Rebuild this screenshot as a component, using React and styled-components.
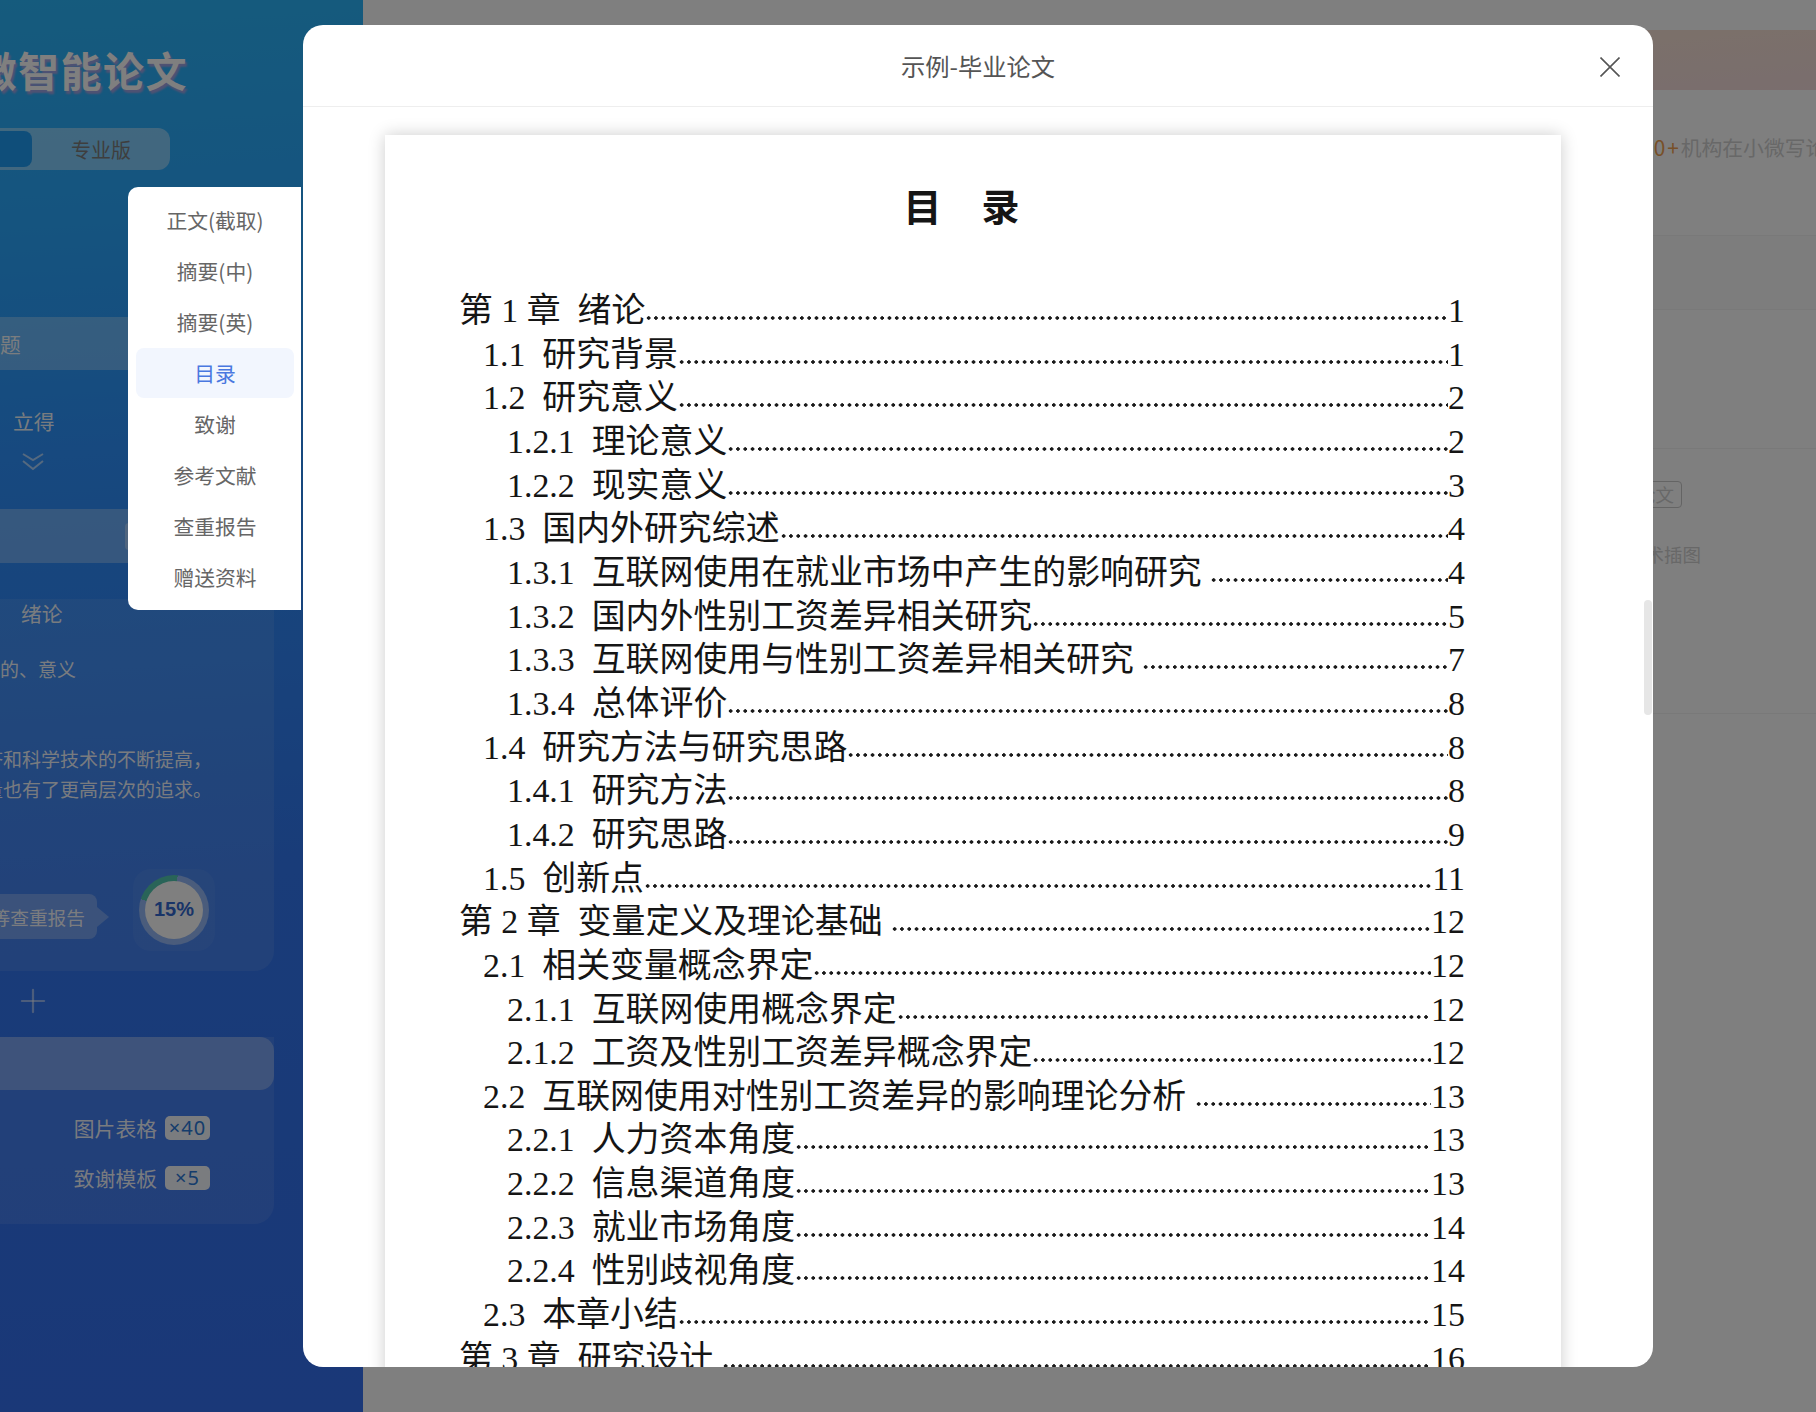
import React from 'react';
import styled, { createGlobalStyle } from 'styled-components';
import { Plus } from 'lucide-react';

const GlobalStyle = createGlobalStyle`
  html, body {
    margin: 0;
    padding: 0;
    background: #fff;
  }
  body {
    font-family: "Noto Sans CJK SC", "Noto Sans", sans-serif;
  }
`;

const Screen = styled.div`
  position: relative;
  display: flex;
  width: 1816px;
  height: 1412px;
  overflow: hidden;
`;

const Sidebar = styled.aside`
  flex: 0 0 363px;
  overflow: hidden;
  background: linear-gradient(176deg, #2ab6fa 0%, #2aa8ff 16%, #2e92fe 32%, #3278f2 62%, #3470f0 100%);
`;

const SidebarInner = styled.div`
  width: 402px;
  margin-left: -128px;
  color: rgba(255, 255, 255, 0.95);
  font-size: 20.8px;
`;

const Brand = styled.h1`
  margin: 0 86px 0 0;
  padding-top: 41px;
  height: 128px;
  box-sizing: border-box;
  text-align: right;
  white-space: nowrap;
  font-size: 41px;
  line-height: 56px;
  letter-spacing: 1.5px;
  font-weight: 700;
  color: #fff;
  text-shadow: 2px 3px 2px rgba(190, 160, 224, 0.8);
`;

const Toggle = styled.div`
  display: flex;
  align-items: center;
  width: 298px;
  height: 42px;
  padding: 3px 0;
  box-sizing: border-box;
  border-radius: 12px;
  background: rgba(255, 255, 255, 0.42);
`;

const ToggleTab = styled.div`
  flex: ${props => (props.$active ? '0 0 160px' : '1')};
  height: 36px;
  border-radius: 8px;
  font-size: 20px;
  line-height: 38px;
  text-align: center;
  color: #7d7d7d;
  background: ${props => (props.$active ? '#1f9cf4' : 'transparent')};
`;

const Band = styled.div`
  display: flex;
  align-items: center;
  height: ${props => props.$height}px;
  margin-top: ${props => props.$top || 0}px;
  border-radius: ${props => props.$radius || '14px 14px 0 0'};
  background: rgba(255, 255, 255, 0.3);
`;

const Hidden = styled.span`
  padding-left: 128px;
`;

const ChipStub = styled.div`
  width: 60px;
  height: 27px;
  margin-left: 253px;
  border-radius: 4px;
  background: rgba(255, 255, 255, 0.35);
`;

const PlainLine = styled.div`
  margin-top: ${props => props.$top || 0}px;
  padding-left: ${props => props.$left || 0}px;
  line-height: 28px;
`;

const ChevronWrap = styled.div`
  height: 20px;
  margin: 12px 0 42px 150px;
  color: rgba(255, 255, 255, 0.6);
`;

const Card = styled.section`
  padding-bottom: ${props => props.$bottom || 20}px;
  border-radius: 0 0 20px 20px;
  background: rgba(255, 255, 255, 0.09);
`;

const RightLine = styled.div`
  margin: ${props => props.$top}px 62px 0 0;
  text-align: right;
  white-space: nowrap;
  font-size: 19px;
  line-height: ${props => props.$line || 30}px;
`;

const PurposeLine = styled(RightLine)`
  margin-right: 198px;
`;

const StatusRow = styled.div`
  display: flex;
  align-items: center;
  justify-content: flex-end;
  gap: 36px;
  height: 82px;
  margin: 65px 59px 0 0;
`;

const Tip = styled.div`
  position: relative;
  height: 45px;
  margin-top: 12px;
  padding: 0 12px;
  border-radius: 8px;
  background: rgba(255, 255, 255, 0.27);
  font-size: 18.7px;
  line-height: 45px;
  white-space: nowrap;

  &::after {
    content: '';
    position: absolute;
    top: 13px;
    right: -12px;
    border-top: 10px solid transparent;
    border-bottom: 10px solid transparent;
    border-left: 12px solid rgba(255, 255, 255, 0.27);
  }
`;

const RateBox = styled.div`
  display: flex;
  align-items: center;
  justify-content: center;
  width: 82px;
  height: 82px;
  border-radius: 18px;
  background: rgba(255, 255, 255, 0.05);
`;

const Ring = styled.div`
  display: flex;
  align-items: center;
  justify-content: center;
  width: 70px;
  height: 70px;
  border-radius: 50%;
`;

const RingCenter = styled.div`
  width: 58px;
  height: 58px;
  border-radius: 50%;
  background: #fff;
  color: #3268d0;
  font-family: "Liberation Sans", sans-serif;
  font-size: 20px;
  font-weight: 700;
  line-height: 56px;
  text-align: center;
`;

const PlusRow = styled.div`
  display: flex;
  align-items: center;
  height: 60px;
  margin-bottom: 6px;
  padding-left: 142px;
  color: rgba(255, 255, 255, 0.5);
`;

const GiftRows = styled.div`
  display: flex;
  flex-direction: column;
  gap: 26px;
  padding-top: 26px;
`;

const GiftRow = styled.div`
  display: flex;
  justify-content: flex-end;
  align-items: center;
  gap: 8px;
  height: 24px;
  margin-right: 64px;
  white-space: nowrap;
`;

const Badge = styled.span`
  width: 45px;
  height: 24px;
  border-radius: 5px;
  background: rgba(255, 255, 255, 0.95);
  color: #2a78d8;
  font-family: "Noto Sans", sans-serif;
  font-size: 20px;
  letter-spacing: 1px;
  line-height: 24px;
  text-align: center;
`;

const Main = styled.main`
  flex: 1;
  min-width: 0;
  overflow: hidden;
  background: #fff;
  color: #d0d0d0;
`;

const Banner = styled.div`
  height: 60px;
  margin-top: 30px;
  background: linear-gradient(175deg, #fae8c8, #f4dcdc);
`;

const StatRow = styled.div`
  height: 146px;
  box-sizing: border-box;
  padding: 27px 0 0 1250px;
  font-size: 20.8px;
  line-height: 60px;
  white-space: nowrap;
  border-bottom: 1px solid #f2f2f2;

  b {
    font-weight: 400;
    letter-spacing: 2px;
    color: #f0a050;
  }
`;

const Block = styled.div`
  height: ${props => props.$height}px;
  box-sizing: border-box;
  padding: ${props => props.$pad || '0'};
  border-bottom: 1px solid #f2f2f2;
  background: ${props => props.$bg || '#fff'};
  font-size: 18.5px;
  white-space: nowrap;
`;

const OutlineTag = styled.span`
  display: inline-block;
  height: 27px;
  padding: 0 7px 0 9px;
  box-sizing: border-box;
  border: 1px solid #c8c8c8;
  border-radius: 4px;
  line-height: 24px;
`;

const ToolLine = styled.div`
  margin-top: 33px;
  line-height: 26px;
`;

const Overlay = styled.div`
  position: absolute;
  inset: 0;
  background: rgba(0, 0, 0, 0.5);
`;

const Modal = styled.div`
  position: absolute;
  top: 25px;
  left: 303px;
  display: flex;
  flex-direction: column;
  width: 1350px;
  height: 1342px;
  overflow: hidden;
  border-radius: 20px;
  background: #fff;
`;

const ModalHead = styled.header`
  display: grid;
  grid-template-columns: 1fr auto 1fr;
  align-items: center;
  flex: 0 0 82px;
  box-sizing: border-box;
  border-bottom: 1px solid #eee;
`;

const ModalTitle = styled.div`
  grid-column: 2;
  font-size: 24.3px;
  color: #555;
`;

const CloseButton = styled.button`
  grid-column: 3;
  justify-self: end;
  display: flex;
  width: 20px;
  height: 20px;
  margin: 2px 33px 0 0;
  padding: 0;
  border: 0;
  background: none;
  color: #555;
`;

const ModalBody = styled.div`
  flex: 1;
  min-height: 0;
  overflow: hidden;
  padding: 28px 92px 0 82px;
`;

const Scrollbar = styled.div`
  position: absolute;
  top: 575px;
  right: 1px;
  width: 8px;
  height: 115px;
  border-radius: 4px;
  background: #e6e6e6;
`;

const Sheet = styled.article`
  padding: 40px 96px 80px 74px;
  background: #fff;
  box-shadow: 0 0 16px rgba(0, 0, 0, 0.2);
  color: #151515;
  font-family: "Liberation Serif", "Noto Sans CJK SC", serif;
`;

const SheetHeading = styled.h2`
  margin: 0 0 54px;
  font-family: "Noto Sans CJK SC", sans-serif;
  font-size: 38px;
  font-weight: 700;
  line-height: 60px;
  letter-spacing: 1px;
  text-align: center;
`;

const TocRow = styled.div`
  display: flex;
  align-items: baseline;
  height: 43.66px;
  padding-left: ${props => props.$level * 24}px;
  font-size: 33.9px;
  line-height: 43.66px;
  white-space: pre;
`;

const TocDots = styled.span`
  flex: 1;
  display: inline-block;
  height: 8px;
  background: radial-gradient(circle at center, #1a1a1a 1.5px, transparent 2px) left bottom / 7.3px 8px repeat-x;
`;

const SectionMenu = styled.nav`
  position: absolute;
  top: 187px;
  left: 128px;
  width: 173px;
  height: 423px;
  box-sizing: border-box;
  padding: 8px 7px 8px 8px;
  border-radius: 10px 0 0 10px;
  background: #fff;
`;

const MenuItem = styled.div`
  height: ${props => (props.$active ? 50 : 51)}px;
  margin-bottom: ${props => (props.$active ? 1 : 0)}px;
  border-radius: 8px;
  background: ${props => (props.$active ? '#f2f6fe' : 'transparent')};
  color: ${props => (props.$active ? '#4a78e0' : '#666')};
  font-size: 20.8px;
  line-height: 50px;
  text-align: center;
`;

const menuItems = ['正文(截取)', '摘要(中)', '摘要(英)', '目录', '致谢', '参考文献', '查重报告', '赠送资料'];

const tocRows = [
  [0, '第 1 章  绪论', '1'],
  [1, '1.1  研究背景', '1'],
  [1, '1.2  研究意义', '2'],
  [2, '1.2.1  理论意义', '2'],
  [2, '1.2.2  现实意义', '3'],
  [1, '1.3  国内外研究综述', '4'],
  [2, '1.3.1  互联网使用在就业市场中产生的影响研究 ', '4'],
  [2, '1.3.2  国内外性别工资差异相关研究', '5'],
  [2, '1.3.3  互联网使用与性别工资差异相关研究 ', '7'],
  [2, '1.3.4  总体评价', '8'],
  [1, '1.4  研究方法与研究思路', '8'],
  [2, '1.4.1  研究方法', '8'],
  [2, '1.4.2  研究思路', '9'],
  [1, '1.5  创新点', '11'],
  [0, '第 2 章  变量定义及理论基础 ', '12'],
  [1, '2.1  相关变量概念界定', '12'],
  [2, '2.1.1  互联网使用概念界定', '12'],
  [2, '2.1.2  工资及性别工资差异概念界定', '12'],
  [1, '2.2  互联网使用对性别工资差异的影响理论分析 ', '13'],
  [2, '2.2.1  人力资本角度', '13'],
  [2, '2.2.2  信息渠道角度', '13'],
  [2, '2.2.3  就业市场角度', '14'],
  [2, '2.2.4  性别歧视角度', '14'],
  [1, '2.3  本章小结', '15'],
  [0, '第 3 章  研究设计 ', '16'],
];

const rate = 15;

export default function App() {
  const sweep = rate * 3.6 + 24;

  return (
    <Screen>
      <GlobalStyle />
      <Sidebar>
        <SidebarInner>
          <Brand>小微智能论文</Brand>
          <Toggle>
            <ToggleTab $active />
            <ToggleTab>专业版</ToggleTab>
          </Toggle>

          <Band $height={53} $top={147}>
            <Hidden>题</Hidden>
          </Band>
          <PlainLine $top={37} $left={141}>立得</PlainLine>
          <ChevronWrap>
            <svg width="22" height="20" viewBox="0 0 22 20" fill="none" stroke="currentColor" strokeWidth="2">
              <path d="M1 3l10 6 10-6" />
              <path d="M1 10l10 8 10-8" />
            </svg>
          </ChevronWrap>

          <Band $height={54}>
            <ChipStub />
          </Band>
          <Card>
            <PlainLine $top={36} $left={149}>绪论</PlainLine>
            <PurposeLine $top={28} $line={28}>研究目的、意义</PurposeLine>
            <RightLine $top={61}>经济和科学技术的不断提高，</RightLine>
            <RightLine $top={0}>生活质量也有了更高层次的追求。</RightLine>
            <StatusRow>
              <Tip>等查重报告</Tip>
              <RateBox>
                <Ring style={{ background: `conic-gradient(from -72deg, #52c8b0 0 ${sweep}deg, rgba(255, 255, 255, 0.4) ${sweep}deg)` }}>
                  <RingCenter>{rate}%</RingCenter>
                </Ring>
              </RateBox>
            </StatusRow>
          </Card>

          <PlusRow>
            <Plus size={38} strokeWidth={1.4} />
          </PlusRow>

          <Card $bottom={34}>
            <Band $height={53} $radius="14px" />
            <GiftRows>
              <GiftRow>图片表格<Badge>×40</Badge></GiftRow>
              <GiftRow>致谢模板<Badge>×5</Badge></GiftRow>
            </GiftRows>
          </Card>
        </SidebarInner>
      </Sidebar>

      <Main>
        <Banner />
        <StatRow><b>1000+</b>机构在小微写论文</StatRow>
        <Block $height={74} $bg="#fbfbfb" />
        <Block $height={139} />
        <Block $height={265} $pad="32px 0 0 1264px">
          <OutlineTag>论文</OutlineTag>
          <ToolLine>学术插图</ToolLine>
        </Block>
      </Main>

      <Overlay />

      <Modal>
        <ModalHead>
          <ModalTitle>示例-毕业论文</ModalTitle>
          <CloseButton aria-label="关闭">
            <svg width="20" height="20" viewBox="0 0 20 20" fill="none" stroke="currentColor" strokeWidth="1.6">
              <path d="M0.5 0.5l19 19M19.5 0.5l-19 19" />
            </svg>
          </CloseButton>
        </ModalHead>
        <ModalBody>
          <Sheet>
            <SheetHeading>目　录</SheetHeading>
            {tocRows.map(([level, label, page]) => (
              <TocRow key={label} $level={level}>
                <span>{label}</span>
                <TocDots />
                <span>{page}</span>
              </TocRow>
            ))}
          </Sheet>
        </ModalBody>
        <Scrollbar />
      </Modal>

      <SectionMenu>
        {menuItems.map(item => (
          <MenuItem key={item} $active={item === '目录'}>{item}</MenuItem>
        ))}
      </SectionMenu>
    </Screen>
  );
}
